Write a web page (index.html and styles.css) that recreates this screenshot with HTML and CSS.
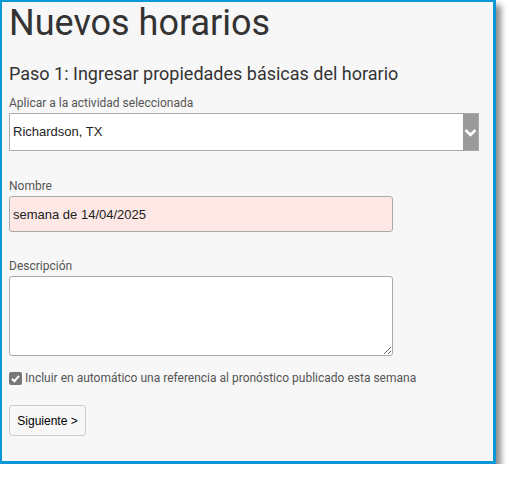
FILE: index.html
```html
<!DOCTYPE html>
<html>
<head>
    <title>Nuevos horarios</title>
    <meta name="viewport" content="width=device-width, initial-scale=1.0">
    <link rel="stylesheet" href="styles.css">
</head>
<body>
    <div class="frame">
        <h1>Nuevos horarios</h1>
        <h2>Paso 1: Ingresar propiedades básicas del horario</h2>

        <label class="field-label">Aplicar a la actividad seleccionada</label>
        <div class="select">
            <span class="select-value">Richardson, TX</span>
            <span class="select-arrow">
                <svg width="13" height="9" viewBox="0 0 13 9">
                    <path d="M1.5 2 L6.5 7 L11.5 2" fill="none" stroke="#fff" stroke-width="2.6"/>
                </svg>
            </span>
        </div>

        <label class="field-label spaced">Nombre</label>
        <input type="text" class="text-input" value="semana de 14/04/2025">

        <label class="field-label spaced desc">Descripción</label>
        <textarea class="text-area"></textarea>

        <div class="check-row">
            <span class="checkbox">
                <svg width="13" height="13" viewBox="0 0 13 13">
                    <path d="M3 6.8 L5.4 9.2 L10 3.8" fill="none" stroke="#fff" stroke-width="2"/>
                </svg>
            </span>
            <span class="check-label">Incluir en automático una referencia al pronóstico publicado esta semana</span>
        </div>

        <button class="next-btn">Siguiente &gt;</button>
    </div>
</body>
</html>
```

FILE: styles.css
```css
body {
    margin: 0;
    background: #fff;
    font-family: Roboto, "Liberation Sans", sans-serif;
}
.frame {
    width: 484px;
    height: 459px;
    box-sizing: content-box;
    border-style: solid;
    border-color: #0a98d8;
    border-width: 2px 3px 3px 2px;
    background: #f7f7f7;
    padding: 0 0 0 7px;
    box-shadow: 5px 5px 6px rgba(0,0,0,0.45);
}
h1 {
    margin: 0;
    font-size: 36px;
    font-weight: normal;
    color: #333;
    line-height: 43px;
}
h2 {
    margin: 18px 0 0 0;
    font-size: 18px;
    font-weight: normal;
    color: #333;
    line-height: 21px;
}
.field-label {
    display: block;
    margin-top: 12px;
    font-size: 12px;
    line-height: 14px;
    color: #555;
}
.field-label.spaced {
    margin-top: 28px;
}
.field-label.desc {
    margin-top: 27px;
}
.select {
    display: flex;
    margin-top: 3px;
    width: 470px;
    height: 38px;
    box-sizing: border-box;
    border: 1px solid #aaa;
    background: #fff;
}
.select-value {
    flex: 1;
    padding-left: 3px;
    font-family: "Liberation Sans", Arial, sans-serif;
    font-size: 13px;
    line-height: 36px;
    color: #222;
}
.select-arrow {
    width: 15px;
    background: #9a9a9a;
    display: flex;
    align-items: center;
    justify-content: center;
}
.text-input, .text-area {
    display: block;
    margin-top: 3px;
    width: 384px;
    box-sizing: border-box;
    border: 1px solid #aaa;
    border-radius: 3px;
    padding: 0 3px;
    font-family: "Liberation Sans", Arial, sans-serif;
    font-size: 13px;
    color: #222;
}
.text-input {
    height: 36px;
    background: #fde8e6;
}
.text-area {
    height: 80px;
    background: #fff;
}
.check-row {
    display: flex;
    align-items: center;
    margin-top: 15px;
}
.checkbox {
    width: 13px;
    height: 13px;
    border-radius: 2px;
    background: #777;
    display: flex;
    margin-right: 3px;
}
.check-label {
    font-size: 12px;
    color: #555;
}
.next-btn {
    margin-top: 20px;
    width: 77px;
    height: 31px;
    border: 1px solid #ccc;
    border-radius: 3px;
    background: #f7f7f7;
    font-family: "Liberation Sans", Arial, sans-serif;
    font-size: 12px;
    color: #000;
    padding: 0;
}
```
